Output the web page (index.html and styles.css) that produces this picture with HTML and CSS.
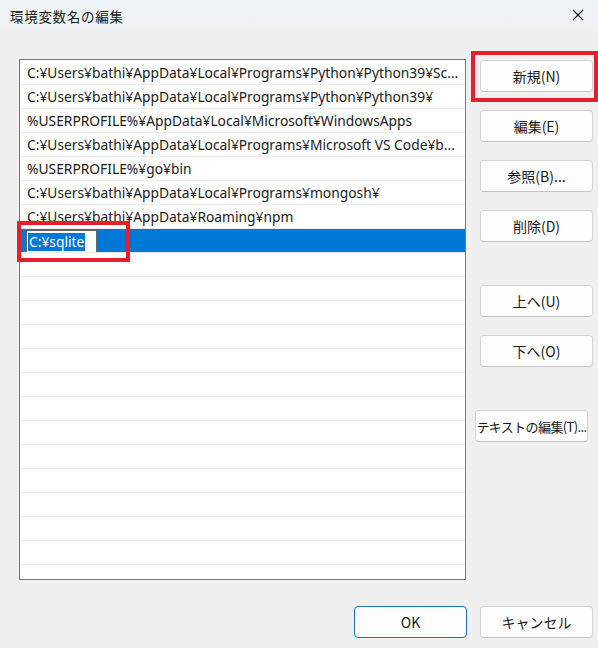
FILE: index.html
```html
<!DOCTYPE html>
<html>
<head>
    <link rel="stylesheet" href="styles.css">
</head>
<body>
    <div class="dialog">
        <div class="titlebar">
            <div class="title">環境変数名の編集</div>
            <div class="close">
                <svg width="12" height="12" viewBox="0 0 12 12">
                    <path d="M1 1 L11 11 M11 1 L1 11" stroke="#1a1a1a" stroke-width="1.1" fill="none"/>
                </svg>
            </div>
        </div>

        <div class="main">
            <div class="list">
                <div class="row">C:¥Users¥bathi¥AppData¥Local¥Programs¥Python¥Python39¥Sc...</div>
                <div class="row">C:¥Users¥bathi¥AppData¥Local¥Programs¥Python¥Python39¥</div>
                <div class="row">%USERPROFILE%¥AppData¥Local¥Microsoft¥WindowsApps</div>
                <div class="row">C:¥Users¥bathi¥AppData¥Local¥Programs¥Microsoft VS Code¥b...</div>
                <div class="row">%USERPROFILE%¥go¥bin</div>
                <div class="row">C:¥Users¥bathi¥AppData¥Local¥Programs¥mongosh¥</div>
                <div class="row">C:¥Users¥bathi¥AppData¥Roaming¥npm</div>
                <div class="row selected">
                    <div class="edit"><span class="sel-text">C:¥sqlite</span></div>
                </div>
                <div class="row"></div>
                <div class="row"></div>
                <div class="row"></div>
                <div class="row"></div>
                <div class="row"></div>
                <div class="row"></div>
                <div class="row"></div>
                <div class="row"></div>
                <div class="row"></div>
                <div class="row"></div>
                <div class="row"></div>
                <div class="row"></div>
                <div class="row"></div>
                <div class="row"></div>
            </div>

            <div class="side">
                <button class="btn">新規(N)</button>
                <button class="btn">編集(E)</button>
                <button class="btn">参照(B)...</button>
                <button class="btn">削除(D)</button>
                <button class="btn group">上へ(U)</button>
                <button class="btn">下へ(O)</button>
                <button class="btn group text-edit">テキストの編集(T)...</button>
            </div>
        </div>

        <div class="footer">
            <button class="btn default">OK</button>
            <button class="btn">キャンセル</button>
        </div>

        <!-- annotations -->
        <div class="mark mark-new"></div>
        <div class="mark mark-row"></div>
    </div>
</body>
</html>
```

FILE: styles.css
```css
body {
    margin: 0;
    overflow: hidden;
}

.dialog {
    position: relative;
    width: 598px;
    height: 648px;
    background: #f0f0f0;
    font-family: "Noto Sans", "Noto Sans CJK JP", sans-serif;
    color: #1a1a1a;
}

.titlebar {
    height: 32px;
    display: flex;
    align-items: center;
    justify-content: space-between;
    padding-left: 10px;
    background: linear-gradient(#eef3f8, #eff2f5 70%, #f0f0f0);
}

.title {
    font-family: "Noto Sans CJK JP", sans-serif;
    font-size: 13.5px;
    letter-spacing: 0.7px;
    margin-top: -1px;
}

.close {
    width: 44px;
    height: 32px;
    display: flex;
    align-items: center;
    justify-content: center;
    margin-right: -2px;
    margin-top: -3px;
}

.main {
    display: flex;
    padding: 27px 0 0 19px;
}

.list {
    width: 445px;
    height: 518px;
    border: 1px solid #7a7a7a;
    background: #fff;
    overflow: hidden;
    padding-top: 1px;
    box-sizing: content-box;
}

.row {
    height: 23px;
    border-bottom: 1px solid #ebebeb;
    padding-left: 7px;
    font-size: 13.8px;
    line-height: 23px;
    white-space: nowrap;
    overflow: hidden;
}

.row.selected {
    background: #0078d7;
    padding-left: 6px;
    display: flex;
    align-items: center;
}

.edit {
    width: 68px;
    height: 21px;
    margin-top: 2px;
    background: #fff;
    border: 1px solid #646464;
    display: flex;
    align-items: center;
    padding-left: 1px;
}

.sel-text {
    background: #0078d7;
    color: #fff;
    line-height: 18px;
    padding: 0 1px;
}

.side {
    display: flex;
    flex-direction: column;
    gap: 18px;
    margin-left: 14px;
    padding-top: 1px;
}

.btn {
    width: 113px;
    height: 32px;
    background: #fdfdfd;
    border: 1px solid #d4d4d4;
    border-bottom-color: #c4c4c4;
    border-radius: 4px;
    font-family: "Noto Sans CJK JP", sans-serif;
    font-size: 14px;
    color: #1a1a1a;
    padding: 0;
    white-space: nowrap;
}

.btn.group {
    margin-top: 25px;
}

.btn.text-edit {
    margin-left: -5px;
    font-size: 13px;
    letter-spacing: -0.6px;
}

.footer {
    display: flex;
    justify-content: flex-end;
    gap: 13px;
    padding: 26px 5px 0 0;
}

.btn.default {
    border: 1px solid #1a6fc0;
}

.mark {
    position: absolute;
    border: 4px solid #e3202b;
    box-sizing: border-box;
}

.mark-new {
    left: 471px;
    top: 51px;
    width: 127px;
    height: 51px;
}

.mark-row {
    left: 17px;
    top: 221px;
    width: 113px;
    height: 41px;
}
```
